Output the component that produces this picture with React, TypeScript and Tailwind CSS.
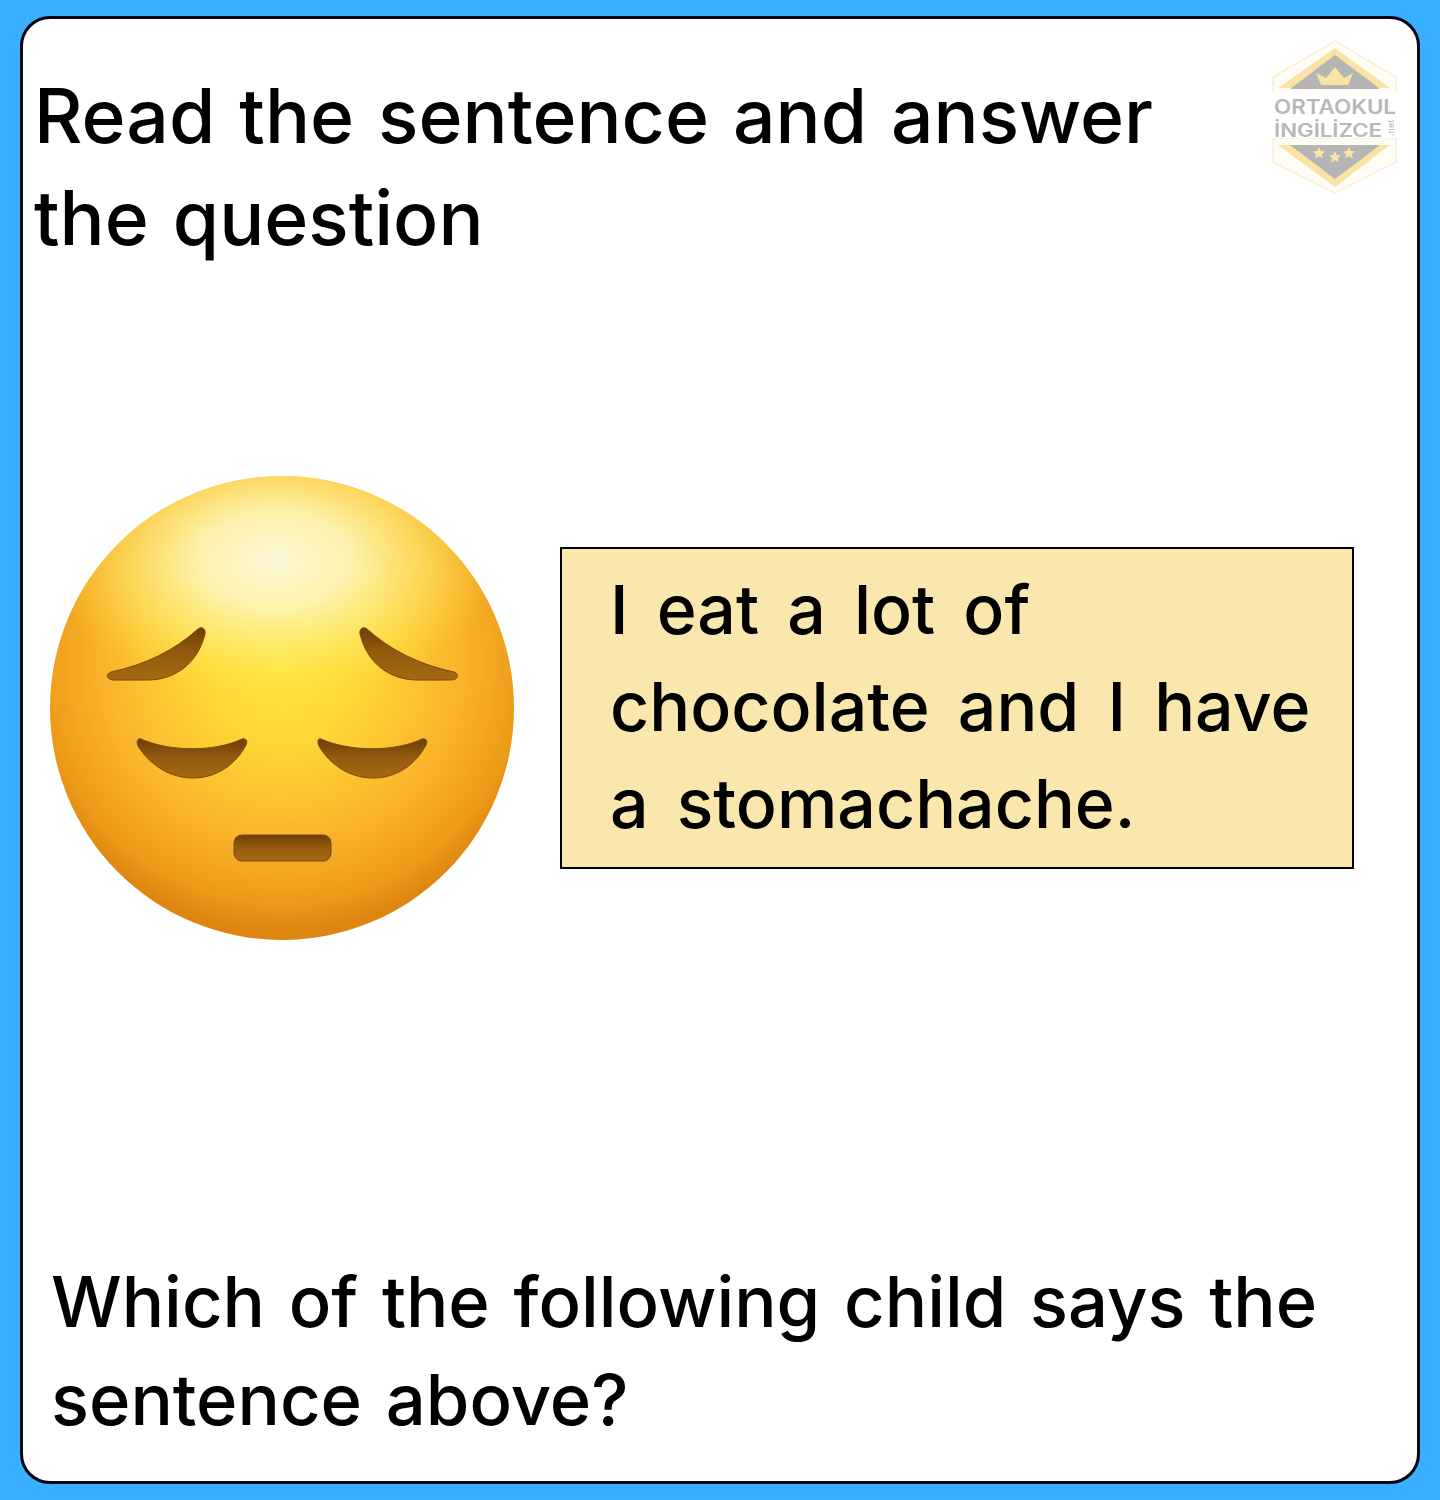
import React from "react";

function SadFace() {
  return (
    <svg viewBox="0 0 500 500" className="w-[500px] h-[500px] shrink-0">
      <defs>
        <radialGradient id="faceBase" cx="50%" cy="40%" r="58%">
          <stop offset="0%" stopColor="#ffe53d" />
          <stop offset="32%" stopColor="#fed536" />
          <stop offset="66%" stopColor="#fab42c" />
          <stop offset="90%" stopColor="#ec9a18" />
          <stop offset="100%" stopColor="#dd8510" />
        </radialGradient>
        <radialGradient id="faceShine" cx="50%" cy="50%" r="50%">
          <stop offset="0%" stopColor="#fdf8d8" stopOpacity="1" />
          <stop offset="35%" stopColor="#fdf6b8" stopOpacity="0.9" />
          <stop offset="70%" stopColor="#fdee70" stopOpacity="0.5" />
          <stop offset="100%" stopColor="#ffe53d" stopOpacity="0" />
        </radialGradient>
        <linearGradient id="featureFill" x1="0" y1="0" x2="0" y2="1">
          <stop offset="0%" stopColor="#6d3e06" />
          <stop offset="45%" stopColor="#93590d" />
          <stop offset="100%" stopColor="#a56a12" />
        </linearGradient>
        <clipPath id="faceClip">
          <circle cx="252" cy="248" r="232" />
        </clipPath>
      </defs>
      <circle cx="252" cy="248" r="232" fill="url(#faceBase)" />
      <g clipPath="url(#faceClip)">
        <ellipse cx="245" cy="100" rx="225" ry="140" fill="url(#faceShine)" />
      </g>
      <g stroke="#7a4708" strokeWidth="1">
        <path d="M81 212 C115 205 145 190 168 169 C172 166 176 169 175 174 C168 203 145 221 115 220 L84 220 C77 220 75 214 81 212 Z" fill="url(#featureFill)" />
        <path d="M424 212 C390 205 360 190 337 169 C333 166 329 169 330 174 C337 203 360 221 390 220 L421 220 C428 220 430 214 424 212 Z" fill="url(#featureFill)" />
        <path d="M111 279 C140 292 185 292 212 279 C216 278 218 281 216 285 C205 306 185 318 163 318 C140 318 120 305 108 286 C106 281 108 278 111 279 Z" fill="url(#featureFill)" />
        <path d="M291 279 C320 292 365 292 392 279 C396 278 398 281 396 285 C385 306 365 318 343 318 C320 318 300 305 289 286 C287 281 288 278 291 279 Z" fill="url(#featureFill)" />
        <rect x="204" y="375" width="97" height="26" rx="8" fill="url(#featureFill)" />
      </g>
    </svg>
  );
}

function SiteLogo() {
  return (
    <svg viewBox="0 0 170 170" className="absolute left-[1227px] top-[11px] w-[170px] h-[170px]">
      {/* hexagon, split by the wordmark */}
      <path d="M23 64 L23 47 L85 11 L146 47 L146 64 Z" fill="#fffdf6" stroke="#fbf0d2" strokeWidth="1.5" />
      <path d="M23 108 L146 108 L146 132 L85 163 L23 132 Z" fill="#fffdf6" stroke="#fbf0d2" strokeWidth="1.5" />
      <path d="M28 58 L85 18 L140 58 Z" fill="#fbe3a6" />
      <path d="M40 59 L85 25 L130 59 Z" fill="#b5b5b5" />
      <path d="M71 55 L66 43 L76 48 L85 37 L94 48 L103 43 L98 55 Z" fill="#fbe3a6" />
      <path d="M28 115 L140 115 L85 157 Z" fill="#fbe3a6" />
      <path d="M40 115 L130 115 L85 149 Z" fill="#b5b5b5" />
      <path d="M69 117 l1.8 4 4.4 .4 -3.3 2.9 1 4.3 -3.9 -2.3 -3.9 2.3 1 -4.3 -3.3 -2.9 4.4 -.4z M85 121 l1.8 4 4.4 .4 -3.3 2.9 1 4.3 -3.9 -2.3 -3.9 2.3 1 -4.3 -3.3 -2.9 4.4 -.4z M99 117 l1.8 4 4.4 .4 -3.3 2.9 1 4.3 -3.9 -2.3 -3.9 2.3 1 -4.3 -3.3 -2.9 4.4 -.4z" fill="#fbe3a6" />
      <rect x="18" y="62" width="134" height="46" fill="#ffffff" />
      <text x="24" y="84" fontFamily="Inter, sans-serif" fontWeight="600" fontSize="20" fill="#b8b8b8" textLength="122" lengthAdjust="spacingAndGlyphs">ORTAOKUL</text>
      <text x="24" y="107" fontFamily="Inter, sans-serif" fontWeight="600" fontSize="18" fill="#b8b8b8" textLength="108" lengthAdjust="spacingAndGlyphs">İNGİLİZCE</text>
      <text fontFamily="Inter, sans-serif" fontSize="9" fill="#b8b8b8" transform="translate(144 106) rotate(-90)">.net</text>
    </svg>
  );
}

export default function App() {
  return (
    <div className="h-[1500px] bg-[#38b0ff] pt-[16px] pb-[16px] px-[20px] font-['Inter',sans-serif] text-black">
      <div className="relative h-full flex flex-col rounded-[30px] border-[3px] border-[#050514] bg-white">
        <SiteLogo />
        <h1 className="pl-[11px] pt-[46px] text-[75px] leading-[102px] font-[450] [word-spacing:4px]">
          Read the sentence and answer
          <br />
          the question
        </h1>

        <div className="flex items-start mt-[191px] pl-[7px]">
          <SadFace />
          <div className="ml-[30px] mt-[87px] w-[794px] h-[322px] border-2 border-black bg-[#fae7ae] pl-[48px] pt-[12px] text-[68px] leading-[97px] font-[450] [word-spacing:10px]">
            I eat a lot of
            <br />
            chocolate and I have
            <br />
            a stomachache.
          </div>
        </div>

        <p className="mt-auto pl-[28px] pb-[32px] text-[70.5px] leading-[98px] font-[450] [word-spacing:5px]">
          Which of the following child says the
          <br />
          sentence above?
        </p>
      </div>
    </div>
  );
}
